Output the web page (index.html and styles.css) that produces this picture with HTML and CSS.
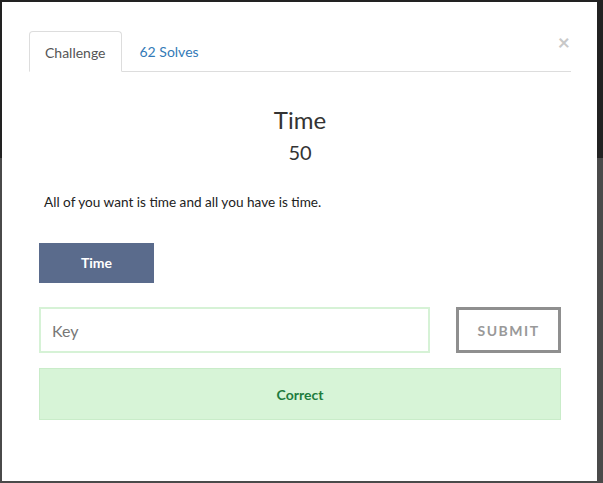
FILE: index.html
```html
<!DOCTYPE html>
<html>
<head>
<meta charset="utf-8">
<link rel="stylesheet" href="styles.css">
</head>
<body>
<div class="backdrop">
  <div class="modal">
    <div class="tabs-row">
      <ul class="tabs">
        <li class="tab active">Challenge</li>
        <li class="tab link">62 Solves</li>
      </ul>
      <span class="close">&times;</span>
    </div>
    <div class="body">
      <h3 class="title">Time</h3>
      <h4 class="value">50</h4>
      <p class="desc">All of you want is time and all you have is time.</p>
      <div class="files">
        <a class="file-btn">Time</a>
      </div>
      <div class="submit-row">
        <input class="key" type="text" placeholder="Key">
        <button class="submit">SUBMIT</button>
      </div>
      <div class="alert">Correct</div>
    </div>
  </div>
</div>
</body>
</html>
```

FILE: styles.css
```css
html, body {
  margin: 0;
  padding: 0;
  height: 100%;
}
body {
  background: #252525;
  font-family: Lato, "Open Sans", sans-serif;
}
.backdrop {
  height: 483px;
  box-sizing: border-box;
  padding: 2px 6px 2px 2px;
  background: linear-gradient(#222 0, #222 158px, #4a4a4a 158px, #4a4a4a 100%);
}
.modal {
  background: #fff;
  height: 100%;
  box-sizing: border-box;
  padding: 29px 26px 0 27px;
}
.tabs-row {
  display: flex;
  align-items: flex-start;
  border-bottom: 1px solid #ddd;
}
.tabs {
  list-style: none;
  margin: 0;
  padding: 0;
  display: flex;
  flex: 1;
}
.tab {
  font-size: 14px;
  padding: 0 15px;
  height: 41px;
  line-height: 42px;
  box-sizing: border-box;
  margin-bottom: -1px;
}
.tab.active {
  color: #555;
  border: 1px solid #ddd;
  border-bottom-color: #fff;
  border-radius: 4px 4px 0 0;
  background: #fff;
}
.tab.link {
  color: #337ab7;
  padding: 0 18px;
}
.close {
  color: #c8c8c8;
  font-size: 21px;
  font-weight: bold;
  line-height: 1;
  margin-top: 0;
  margin-right: 1px;
}
.body {
  padding: 0 10px;
}
.title {
  margin: 34px 0 0;
  text-align: center;
  font-size: 24px;
  font-weight: 400;
  color: #333;
  line-height: 28px;
}
.value {
  margin: 6px 0 0;
  text-align: center;
  font-size: 20px;
  font-weight: 400;
  color: #333;
  line-height: 24px;
}
.desc {
  margin: 28px 0 0;
  padding-left: 5px;
  font-size: 13.6px;
  color: #222;
  line-height: 20px;
}
.files {
  margin-top: 31px;
  display: flex;
}
.file-btn {
  display: block;
  width: 115px;
  height: 40px;
  line-height: 40px;
  text-align: center;
  background: #5a6b8c;
  color: #fff;
  font-size: 14px;
  font-weight: bold;
}
.submit-row {
  margin-top: 24px;
  display: flex;
  justify-content: space-between;
}
.key {
  width: 391px;
  height: 46px;
  box-sizing: border-box;
  border: 2px solid #d6f2d6;
  padding: 0 11px;
  font-family: Lato, sans-serif;
  font-size: 16px;
  color: #555;
  outline: none;
}
.key::placeholder {
  color: #777;
}
.submit {
  width: 105px;
  height: 46px;
  box-sizing: border-box;
  border: 3px solid #8f8f8f;
  background: #fff;
  color: #999;
  font-family: Lato, sans-serif;
  font-size: 14px;
  font-weight: bold;
  letter-spacing: 1.5px;
  padding: 0;
}
.alert {
  margin-top: 15px;
  height: 52px;
  box-sizing: border-box;
  border: 1px solid #c9ecc9;
  background: #d7f4d7;
  color: #1e7c3e;
  font-size: 14px;
  font-weight: bold;
  display: flex;
  align-items: center;
  justify-content: center;
}
```
